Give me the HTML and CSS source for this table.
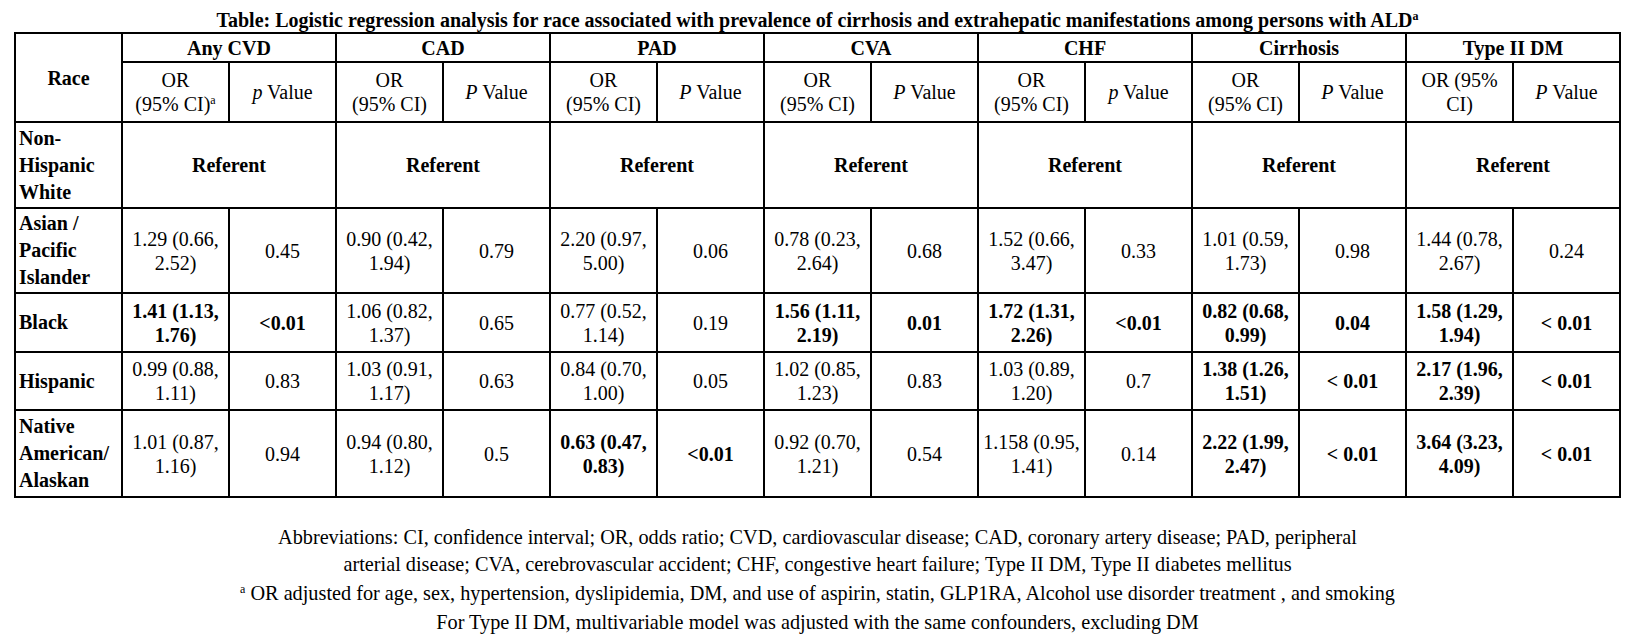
FILE: index.html
```html
<!DOCTYPE html>
<html lang="en">
<head>
<meta charset="utf-8">
<title>Logistic regression table</title>
<link rel="stylesheet" href="styles.css">
</head>
<body>
<div class="page">
  <h1 class="title">Table: Logistic regression analysis for race associated with prevalence of cirrhosis and extrahepatic manifestations among persons with ALD<sup>a</sup></h1>
  <table class="results">
    <colgroup>
      <col><col><col><col><col><col><col><col><col><col><col><col><col><col><col>
    </colgroup>
    <thead>
      <tr class="row-group">
        <th rowspan="2" class="race-head">Race</th>
        <th colspan="2">Any CVD</th>
        <th colspan="2">CAD</th>
        <th colspan="2">PAD</th>
        <th colspan="2">CVA</th>
        <th colspan="2">CHF</th>
        <th colspan="2">Cirrhosis</th>
        <th colspan="2">Type II DM</th>
      </tr>
      <tr class="row-sub">
        <td>OR<br>(95% CI)<sup>a</sup></td><td><i>p</i> Value</td>
        <td>OR<br>(95% CI)</td><td><i>P</i> Value</td>
        <td>OR<br>(95% CI)</td><td><i>P</i> Value</td>
        <td>OR<br>(95% CI)</td><td><i>P</i> Value</td>
        <td>OR<br>(95% CI)</td><td><i>p</i> Value</td>
        <td>OR<br>(95% CI)</td><td><i>P</i> Value</td>
        <td>OR (95%<br>CI)</td><td><i>P</i> Value</td>
      </tr>
    </thead>
    <tbody>
      <tr class="row-tall">
        <th class="label">Non-<br>Hispanic<br>White</th>
        <td colspan="2" class="b">Referent</td>
        <td colspan="2" class="b">Referent</td>
        <td colspan="2" class="b">Referent</td>
        <td colspan="2" class="b">Referent</td>
        <td colspan="2" class="b">Referent</td>
        <td colspan="2" class="b">Referent</td>
        <td colspan="2" class="b">Referent</td>
      </tr>
      <tr class="row-tall2">
        <th class="label">Asian /<br>Pacific<br>Islander</th>
        <td>1.29 (0.66,<br>2.52)</td><td>0.45</td>
        <td>0.90 (0.42,<br>1.94)</td><td>0.79</td>
        <td>2.20 (0.97,<br>5.00)</td><td>0.06</td>
        <td>0.78 (0.23,<br>2.64)</td><td>0.68</td>
        <td>1.52 (0.66,<br>3.47)</td><td>0.33</td>
        <td>1.01 (0.59,<br>1.73)</td><td>0.98</td>
        <td>1.44 (0.78,<br>2.67)</td><td>0.24</td>
      </tr>
      <tr class="row-black">
        <th class="label">Black</th>
        <td class="b">1.41 (1.13,<br>1.76)</td><td class="b">&lt;0.01</td>
        <td>1.06 (0.82,<br>1.37)</td><td>0.65</td>
        <td>0.77 (0.52,<br>1.14)</td><td>0.19</td>
        <td class="b">1.56 (1.11,<br>2.19)</td><td class="b">0.01</td>
        <td class="b">1.72 (1.31,<br>2.26)</td><td class="b">&lt;0.01</td>
        <td class="b">0.82 (0.68,<br>0.99)</td><td class="b">0.04</td>
        <td class="b">1.58 (1.29,<br>1.94)</td><td class="b">&lt; 0.01</td>
      </tr>
      <tr class="row-hisp">
        <th class="label">Hispanic</th>
        <td>0.99 (0.88,<br>1.11)</td><td>0.83</td>
        <td>1.03 (0.91,<br>1.17)</td><td>0.63</td>
        <td>0.84 (0.70,<br>1.00)</td><td>0.05</td>
        <td>1.02 (0.85,<br>1.23)</td><td>0.83</td>
        <td>1.03 (0.89,<br>1.20)</td><td>0.7</td>
        <td class="b">1.38 (1.26,<br>1.51)</td><td class="b">&lt; 0.01</td>
        <td class="b">2.17 (1.96,<br>2.39)</td><td class="b">&lt; 0.01</td>
      </tr>
      <tr class="row-native">
        <th class="label">Native<br>American/<br>Alaskan</th>
        <td>1.01 (0.87,<br>1.16)</td><td>0.94</td>
        <td>0.94 (0.80,<br>1.12)</td><td>0.5</td>
        <td class="b">0.63 (0.47,<br>0.83)</td><td class="b">&lt;0.01</td>
        <td>0.92 (0.70,<br>1.21)</td><td>0.54</td>
        <td>1.158 (0.95,<br>1.41)</td><td>0.14</td>
        <td class="b">2.22 (1.99,<br>2.47)</td><td class="b">&lt; 0.01</td>
        <td class="b">3.64 (3.23,<br>4.09)</td><td class="b">&lt; 0.01</td>
      </tr>
    </tbody>
  </table>
  <div class="notes">
    <p class="note">Abbreviations: CI, confidence interval; OR, odds ratio; CVD, cardiovascular disease; CAD, coronary artery disease; PAD, peripheral<br>arterial disease; CVA, cerebrovascular accident; CHF, congestive heart failure; Type II DM, Type II diabetes mellitus</p>
    <p class="note"><sup>a</sup> OR adjusted for age, sex, hypertension, dyslipidemia, DM, and use of aspirin, statin, GLP1RA, Alcohol use disorder treatment , and smoking</p>
    <p class="note">For Type II DM, multivariable model was adjusted with the same confounders, excluding DM</p>
  </div>
</div>
</body>
</html>
```
FILE: styles.css
```css
html, body {
  margin: 0;
  padding: 0;
  background: #ffffff;
  color: #000000;
  font-family: "Liberation Serif", "Times New Roman", serif;
}

.page {
  width: 1607px;
  margin-left: 14px;
}

.title {
  margin: 0;
  padding-top: 8px;
  font-size: 20px;
  line-height: 24px;
  font-weight: bold;
  text-align: center;
  white-space: nowrap;
}

sup {
  font-size: 12px;
  line-height: 0;
  vertical-align: 7px;
}

.results {
  width: 100%;
  table-layout: fixed;
  border-collapse: collapse;
  font-size: 20px;
  line-height: 24px;
}

.results th,
.results td {
  border: 2px solid #000000;
  padding: 0 3px;
  text-align: center;
  vertical-align: middle;
}

.results th {
  font-weight: bold;
}

.results td.b {
  font-weight: bold;
}

.results th.label {
  text-align: left;
  line-height: 27px;
}

.row-group { height: 29px; }
.row-sub { height: 60px; }
.row-tall { height: 86px; }
.row-tall2 { height: 85px; }
.row-black { height: 59px; }
.row-hisp { height: 58px; }
.row-native { height: 87px; }

.notes {
  padding-top: 26px;
}

.note {
  margin: 0;
  font-size: 20.25px;
  line-height: 27px;
  text-align: center;
  white-space: nowrap;
}

.note + .note {
  margin-top: 2px;
}
```
